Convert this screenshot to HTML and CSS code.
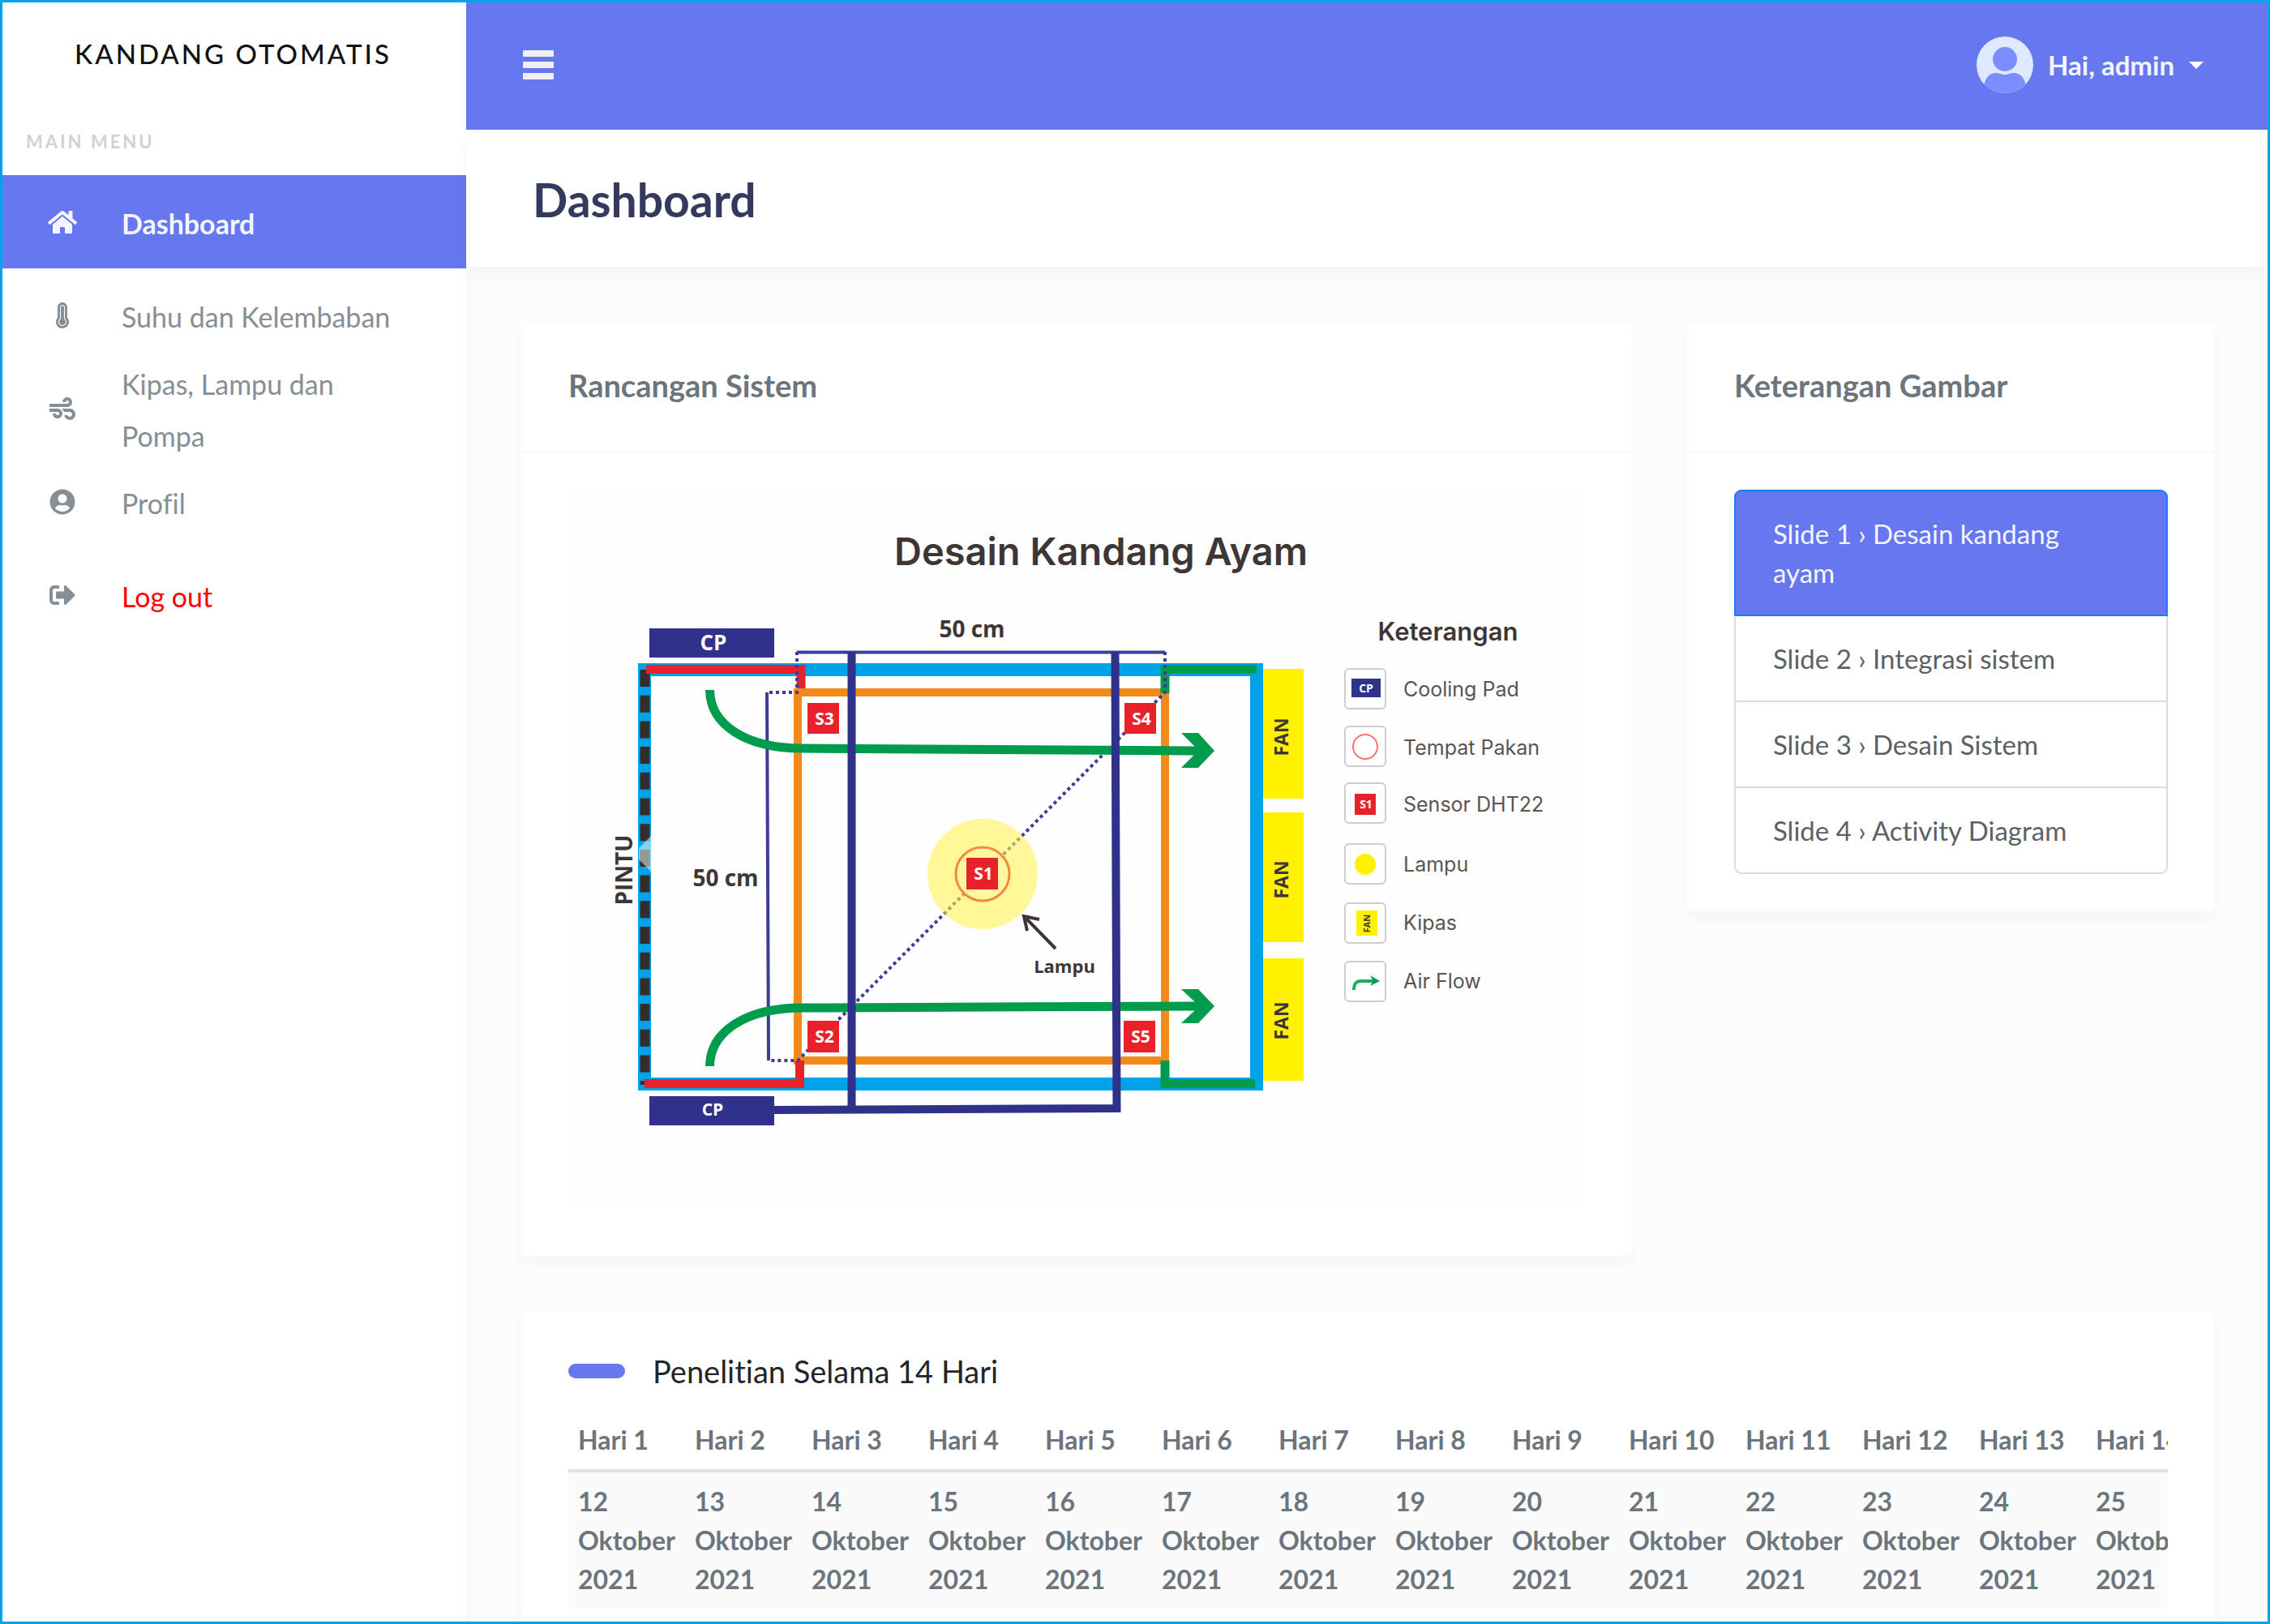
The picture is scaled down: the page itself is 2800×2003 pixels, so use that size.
FILE: index.html
```html
<!DOCTYPE html>
<html lang="id">
<head>
<meta charset="utf-8">
<meta name="viewport" content="width=device-width, initial-scale=1">
<title>Kandang Otomatis</title>
<link rel="stylesheet" href="styles.css">
</head>
<body>
<div class="app">
  <aside class="sidebar">
    <a class="brand" href="#">KANDANG OTOMATIS</a>
    <p class="menu-header">MAIN MENU</p>
    <nav class="menu">
      <a class="menu-link is-active" href="#">
        <svg class="icon" viewBox="0 0 576 512" aria-hidden="true"><path d="M280.37 148.26L96 300.11V464a16 16 0 0 0 16 16l112.06-.29a16 16 0 0 0 15.92-16V368a16 16 0 0 1 16-16h64a16 16 0 0 1 16 16v95.64a16 16 0 0 0 16 16.05L464 480a16 16 0 0 0 16-16V300L295.67 148.26a12.19 12.19 0 0 0-15.3 0zM571.6 251.47L488 182.56V44.05a12 12 0 0 0-12-12h-56a12 12 0 0 0-12 12v72.61L318.47 43a48 48 0 0 0-61 0L4.34 251.47a12 12 0 0 0-1.6 16.9l25.5 31A12 12 0 0 0 45.15 301l235.22-193.74a12.19 12.19 0 0 1 15.3 0L530.9 301a12 12 0 0 0 16.9-1.6l25.5-31a12 12 0 0 0-1.7-16.93z"/></svg>
        <span>Dashboard</span>
      </a>
      <a class="menu-link" href="#">
        <svg class="icon" viewBox="0 0 256 512" aria-hidden="true"><path d="M224 96c0-53.019-42.981-96-96-96S32 42.981 32 96v203.347C12.225 321.756.166 351.136 0 383.333c-.359 70.303 56.787 128.176 127.089 128.664.299.002.61.003.911.003 70.698 0 128-57.304 128-128 0-32.459-12.088-62.09-32-84.653V96zm-96 368l-.576-.002c-43.86-.304-79.647-36.544-79.423-80.42.173-33.98 19.266-51.652 31.999-66.08V96c0-26.467 21.533-48 48-48s48 21.533 48 48v221.498c12.63 14.312 32 32.164 32 66.502 0 44.112-35.888 80-80 80zm64-80c0 35.346-28.654 64-64 64s-64-28.654-64-64c0-23.685 12.876-44.349 32-55.417V96c0-17.673 14.327-32 32-32s32 14.327 32 32v232.583c19.124 11.068 32 31.732 32 55.417z"/></svg>
        <span>Suhu dan Kelembaban</span>
      </a>
      <a class="menu-link" href="#">
        <svg class="icon" viewBox="0 0 512 512" aria-hidden="true"><path d="M156.700 256H16c-8.800 0-16 7.200-16 16v32c0 8.800 7.200 16 16 16h142.200c15.900 0 30.800 10.900 33.400 26.600 3.300 20-12.100 37.400-31.600 37.400-14.100 0-26.100-9.200-30.400-21.900-2.100-6.300-8.600-10.100-15.200-10.100H81.600c-9.800 0-17.700 8.800-15.900 18.400 8.600 44.100 47.600 77.600 94.200 77.600 57.100 0 102.700-50.100 95.200-108.600C249 291 205.400 256 156.700 256zM16 224h336c59.700 0 106.800-54.800 93.800-116.700-7.600-36.200-36.900-65.500-73.100-73.100-55.400-11.600-105.100 24.900-114.900 75.500-1.900 9.600 6.100 18.300 15.800 18.300h32.800c6.700 0 13.100-3.800 15.200-10.100C325.900 105.200 337.900 96 352 96c19.400 0 34.900 17.400 31.600 37.400-2.600 15.700-17.400 26.600-33.400 26.600H16c-8.800 0-16 7.200-16 16v32c0 8.800 7.200 16 16 16zm384 32H243.700c19.300 16.600 33.200 38.800 39.800 64H400c26.500 0 48 21.500 48 48s-21.500 48-48 48c-17.900 0-33.300-9.900-41.600-24.400-2.900-5-8.700-7.600-14.500-7.600h-33.800c-10.900 0-19 10.800-15.300 21.100 17.800 50.600 70.500 84.800 129.400 72.300 41.200-8.700 75.100-41.600 84.700-82.700C526 321.500 470.500 256 400 256z"/></svg>
        <span>Kipas, Lampu dan Pompa</span>
      </a>
      <a class="menu-link" href="#">
        <svg class="icon" viewBox="0 0 496 512" aria-hidden="true"><path d="M248 8C111 8 0 119 0 256s111 248 248 248 248-111 248-248S385 8 248 8zm0 96c48.600 0 88 39.400 88 88s-39.400 88-88 88-88-39.400-88-88 39.400-88 88-88zm0 344c-58.700 0-111.300-26.600-146.500-68.200 18.800-35.400 55.600-59.800 98.500-59.800 2.400 0 4.800.4 7.100 1.100 13 4.200 26.600 6.900 40.900 6.900 14.300 0 28-2.700 40.900-6.900 2.300-.7 4.700-1.100 7.100-1.100 42.900 0 79.700 24.400 98.500 59.800C359.300 421.400 306.700 448 248 448z"/></svg>
        <span>Profil</span>
      </a>
      <a class="menu-link" href="#">
        <svg class="icon" viewBox="0 0 512 512" aria-hidden="true"><path d="M497 273L329 441c-15 15-41 4.500-41-17v-96H152c-13.300 0-24-10.700-24-24v-96c0-13.300 10.700-24 24-24h136V88c0-21.400 25.900-32 41-17l168 168c9.300 9.400 9.300 24.600 0 34zM192 436v-40c0-6.600-5.400-12-12-12H96c-17.700 0-32-14.300-32-32V160c0-17.700 14.300-32 32-32h84c6.600 0 12-5.400 12-12V76c0-6.600-5.400-12-12-12H96c-53 0-96 43-96 96v192c0 53 43 96 96 96h84c6.600 0 12-5.400 12-12z"/></svg>
        <span class="logout">Log out</span>
      </a>
    </nav>
  </aside>

  <div class="page">
    <header class="topbar">
      <button class="toggle" type="button" aria-label="Menu">
        <svg viewBox="0 0 38 36" aria-hidden="true"><rect width="38" height="8" rx="1"/><rect y="14" width="38" height="8" rx="1"/><rect y="28" width="38" height="8" rx="1"/></svg>
      </button>
      <button class="user" type="button">
        <svg class="avatar" viewBox="0 0 70 70" aria-hidden="true">
          <defs><clipPath id="round"><circle cx="35" cy="35" r="35"/></clipPath></defs>
          <g clip-path="url(#round)">
            <rect width="70" height="70" fill="#dfe9ff"/>
            <circle cx="35" cy="28" r="15" fill="#7b8dff"/>
            <path d="M8 72C8 54 14 45 24 45C29 45 30 47 35 47C40 47 41 45 46 45C56 45 62 54 62 72Z" fill="#7b8dff"/>
          </g>
        </svg>
        <span>Hai, admin</span>
        <span class="caret"></span>
      </button>
    </header>

    <div class="heading"><h1>Dashboard</h1></div>

    <main class="content">
      <section class="card card-design">
        <h2 class="card-header">Rancangan Sistem</h2>
        <div class="card-body">
          <svg class="diagram" viewBox="701 604 1254 887" role="img" aria-label="Desain Kandang Ayam">
            <rect x="701" y="604" width="1254" height="887" fill="#fefefe"/>
            <text class="d-title" x="1358" y="697">Desain Kandang Ayam</text>

            <!-- cage walls and door -->
            <rect x="795" y="826" width="755" height="511" fill="none" stroke="#00a2e8" stroke-width="16"/>
            <path d="M795.500 826V1338" stroke="#332d2c" stroke-width="12" stroke-dasharray="21 10.700"/>
            <path d="M788 1046L803 1031V1075L788 1060Z" fill="#fff" opacity=".5"/>

            <!-- inner frame -->
            <rect x="984" y="854" width="453" height="454" fill="none" stroke="#f28a1b" stroke-width="10"/>
            <path d="M797 825.500H988V849M795 1336.500H986.500V1308" fill="none" stroke="#e9212b" stroke-width="11"/>
            <path d="M1550 825.500H1437V855M1548 1336.500H1437V1308" fill="none" stroke="#009c4d" stroke-width="11"/>

            <!-- dimensions -->
            <path d="M983 804.500H1437M946 854L948 1308" fill="none" stroke="#3c3e96" stroke-width="4"/>
            <path d="M983 804V854H948M1437 804V854L984 1308H948" fill="none" stroke="#3c3e96" stroke-width="4" stroke-dasharray="4 4"/>

            <!-- lamp -->
            <circle cx="1212" cy="1078" r="68" fill="#fff24d" opacity=".58"/>
            <circle cx="1212" cy="1078" r="33" fill="#fff79f" stroke="#f28a3a" stroke-width="3"/>

            <!-- air flow -->
            <g fill="none" stroke="#009c4d" stroke-width="11">
              <path d="M875.500 851C876 894 920 923 990 923L1476 926"/>
              <path d="M875.500 1315C876 1272 920 1243 990 1243L1476 1241"/>
            </g>
            <path d="M1457 904H1478L1498 926L1478 947H1457L1474 930V921Z" fill="#009c4d"/>
            <path d="M1457 1220H1478L1498 1241L1478 1262H1457L1474 1246V1236Z" fill="#009c4d"/>

            <!-- cooling pad pipes -->
            <path d="M1050.500 804V1368M1375.500 804L1377.500 1372M955 1369L1382 1367" fill="none" stroke="#2f318b" stroke-width="10"/>
            <rect x="801" y="775" width="154" height="36" fill="#2f318b"/>
            <rect x="801" y="1352" width="154" height="36" fill="#2f318b"/>
            <text class="d-bold d-light" font-size="26" x="880" y="802">CP</text>
            <text class="d-bold d-light" font-size="21" x="879" y="1376">CP</text>

            <!-- sensors -->
            <g fill="#e9212b">
              <rect x="996" y="867" width="39" height="38"/>
              <rect x="1387" y="867" width="39" height="38"/>
              <rect x="996" y="1259" width="39" height="39"/>
              <rect x="1386" y="1259" width="39" height="39"/>
              <rect x="1192" y="1058" width="39" height="39"/>
            </g>
            <g class="d-bold d-light" font-size="21">
              <text x="1017" y="894">S3</text>
              <text x="1408" y="894">S4</text>
              <text x="1017" y="1286">S2</text>
              <text x="1407" y="1286">S5</text>
              <text x="1213" y="1085">S1</text>
            </g>

            <path d="M1302 1170L1264 1131M1282 1134L1263 1130L1267 1148" fill="none" stroke="#3e3634" stroke-width="4"/>
            <g class="d-bold d-dark">
              <text font-size="22" x="1313" y="1200">Lampu</text>
              <text font-size="28" x="1199" y="786">50 cm</text>
              <text font-size="28" x="895" y="1093">50 cm</text>
              <text font-size="28" transform="translate(780 1073) rotate(-90)">PINTU</text>
            </g>

            <!-- fans -->
            <g fill="#fff100">
              <rect x="1558" y="825" width="50" height="160"/>
              <rect x="1558" y="1002" width="50" height="160"/>
              <rect x="1558" y="1182" width="50" height="151"/>
            </g>
            <g class="d-bold d-dark" font-size="23">
              <text transform="translate(1589 909) rotate(-90)">FAN</text>
              <text transform="translate(1589 1085) rotate(-90)">FAN</text>
              <text transform="translate(1589 1259) rotate(-90)">FAN</text>
            </g>

            <!-- legend -->
            <text class="d-subtitle" x="1786" y="790">Keterangan</text>
            <g fill="#fff" stroke="#cdcdcd" stroke-width="2">
              <rect x="1659" y="825" width="50" height="49" rx="5"/>
              <rect x="1659" y="896" width="50" height="49" rx="5"/>
              <rect x="1659" y="966" width="50" height="49" rx="5"/>
              <rect x="1659" y="1041" width="50" height="49" rx="5"/>
              <rect x="1659" y="1114" width="50" height="49" rx="5"/>
              <rect x="1659" y="1186" width="50" height="49" rx="5"/>
            </g>
            <rect x="1667" y="837" width="36" height="23" fill="#2f318b"/>
            <text class="d-bold d-light" font-size="14" x="1685" y="854">CP</text>
            <circle cx="1684" cy="921" r="15" fill="none" stroke="#f77070" stroke-width="2"/>
            <rect x="1671" y="979" width="26" height="26" fill="#e9212b"/>
            <text class="d-bold d-light" font-size="14" x="1685" y="997">S1</text>
            <circle cx="1684" cy="1066" r="13" fill="#fff100"/>
            <rect x="1673" y="1123" width="26" height="31" fill="#fff100"/>
            <text class="d-bold d-dark" font-size="11" transform="translate(1690 1139) rotate(-90)">FAN</text>
            <path d="M1670 1221C1670 1213 1673 1210 1679 1210H1695" fill="none" stroke="#20a865" stroke-width="4"/>
            <path d="M1690 1203L1702 1210L1690 1216L1694 1210Z" fill="#009c4d"/>
            <g class="d-legend">
              <text x="1731" y="859">Cooling Pad</text>
              <text x="1731" y="931">Tempat Pakan</text>
              <text x="1731" y="1001">Sensor DHT22</text>
              <text x="1731" y="1075">Lampu</text>
              <text x="1731" y="1147">Kipas</text>
              <text x="1731" y="1219">Air Flow</text>
            </g>
          </svg>
        </div>
      </section>

      <section class="card card-slides">
        <h2 class="card-header">Keterangan Gambar</h2>
        <div class="card-body">
          <div class="slides">
            <a class="slide is-active" href="#">Slide 1 › Desain kandang ayam</a>
            <a class="slide" href="#">Slide 2 › Integrasi sistem</a>
            <a class="slide" href="#">Slide 3 › Desain Sistem</a>
            <a class="slide" href="#">Slide 4 › Activity Diagram</a>
          </div>
        </div>
      </section>

      <section class="card card-days">
        <h2 class="days-title"><span class="pill"></span>Penelitian Selama 14 Hari</h2>
        <div class="table-wrap">
          <table class="days">
            <thead>
              <tr><th>Hari 1</th><th>Hari 2</th><th>Hari 3</th><th>Hari 4</th><th>Hari 5</th><th>Hari 6</th><th>Hari 7</th><th>Hari 8</th><th>Hari 9</th><th>Hari 10</th><th>Hari 11</th><th>Hari 12</th><th>Hari 13</th><th>Hari 14</th></tr>
            </thead>
            <tbody>
              <tr><td>12 Oktober 2021</td><td>13 Oktober 2021</td><td>14 Oktober 2021</td><td>15 Oktober 2021</td><td>16 Oktober 2021</td><td>17 Oktober 2021</td><td>18 Oktober 2021</td><td>19 Oktober 2021</td><td>20 Oktober 2021</td><td>21 Oktober 2021</td><td>22 Oktober 2021</td><td>23 Oktober 2021</td><td>24 Oktober 2021</td><td>25 Oktober 2021</td></tr>
            </tbody>
          </table>
        </div>
      </section>
    </main>
  </div>
</div>
<div class="frame" aria-hidden="true"></div>
</body>
</html>
```
FILE: styles.css
```css
:root {
  --primary: #6777ef;
  --muted: #6c757d;
  --frame: #00a2e8;
}

* { box-sizing: border-box; }

body {
  margin: 0;
  background: #fafdfb;
  color: var(--muted);
  font: 400 33px/48px Lato, sans-serif;
  font-variant-ligatures: none;
}

h1, h2, p { margin: 0; }
a { color: inherit; text-decoration: none; }
button { border: 0; background: none; padding: 0; font: inherit; color: inherit; cursor: pointer; }

.app { display: flex; min-height: 100vh; }

.frame {
  position: fixed;
  inset: 0;
  border: 3px solid var(--frame);
  pointer-events: none;
}

/* Sidebar */
.sidebar {
  flex: 0 0 575px;
  background: #fff;
  box-shadow: 0 9px 18px rgba(0, 0, 0, .03);
}
.brand {
  display: block;
  line-height: 132px;
  text-align: center;
  color: #111;
  font-weight: 500;
  letter-spacing: 3px;
}
.menu-header {
  padding-left: 32px;
  line-height: 86px;
  margin-bottom: -2px;
  font-size: 22px;
  font-weight: 700;
  letter-spacing: 3px;
  color: #cdd3d8;
}
.menu-link {
  display: flex;
  align-items: center;
  gap: 53px;
  height: 115px;
  padding: 0 57px;
  font-size: 34px;
  line-height: 64px;
  color: #868e96;
}
.menu-link span { padding-top: 4px; }
.menu-link.is-active { background: var(--primary); color: #f3f5ff; font-weight: 700; }
.icon { flex: 0 0 40px; height: 32px; fill: currentColor; }
.logout { color: #f00; }

/* Page */
.page { flex: 1; min-width: 0; display: flex; flex-direction: column; }
.topbar {
  display: flex;
  align-items: center;
  justify-content: space-between;
  height: 160px;
  padding: 0 82px 0 70px;
  background: var(--primary);
  color: #f3f5ff;
}
.toggle svg { display: block; width: 38px; height: 36px; fill: #f0f0f2; }
.user { display: flex; align-items: center; gap: 18px; font-weight: 700; }
.avatar { width: 70px; height: 70px; }
.caret { border: 9px solid transparent; border-top-color: #fff; border-bottom: 0; }

.heading {
  padding: 50px 82px 47px;
  background: #fff;
  box-shadow: 0 9px 18px rgba(0, 0, 0, .03);
}
.heading h1 { font-size: 57px; line-height: 72px; font-weight: 700; color: #34395e; }

.content {
  flex: 1;
  display: grid;
  grid-template-columns: repeat(12, 1fr);
  grid-template-rows: auto 1fr;
  gap: 68px;
  align-items: start;
  padding: 69px 68px 0;
}

/* Cards */
.card {
  min-width: 0;
  border-radius: 7px;
  background: #fff;
  box-shadow: 0 9px 18px rgba(0, 0, 0, .03);
}
.card-design { grid-column: span 8; }
.card-slides { grid-column: span 4; }
.card-days { grid-column: span 12; align-self: stretch; padding: 46px 58px 12px; }
.card-header {
  padding: 49px 58px 53px;
  border-bottom: 2px solid #f7f8f8;
  font-size: 38px;
  line-height: 56px;
  font-weight: 700;
}
.card-body { padding: 46px 58px; }
.card-design .card-body { padding-bottom: 58px; }

/* Slide list */
.slides { border-radius: 9px; border: 2px solid #dcdcdc; }
.slide { display: block; padding: 28px 66px 28px 46px; color: #5b6167; }
.slide + .slide { border-top: 2px solid #dcdcdc; }
.slide.is-active {
  margin: -2px -2px 0;
  border: 2px solid #1a7dff;
  border-radius: 9px 9px 0 0;
  background: var(--primary);
  color: #f3f5ff;
}
.slide.is-active + .slide { border-top: 0; }

/* Diagram */
.diagram { display: block; width: 100%; }
.d-title { font: 600 47px Inter, sans-serif; fill: #3e3634; text-anchor: middle; }
.d-subtitle { font: 600 31px Inter, sans-serif; fill: #3e3634; text-anchor: middle; }
.d-legend { font: 400 25px Inter, sans-serif; fill: #5a5452; }
.d-bold { font-family: "Open Sans", sans-serif; font-weight: 700; text-anchor: middle; }
.d-light { fill: #fff; }
.d-dark { fill: #3e3634; }

/* Day table */
.days-title {
  display: flex;
  align-items: center;
  gap: 34px;
  margin-bottom: 21px;
  font-size: 38px;
  line-height: 56px;
  font-weight: 400;
  color: #212529;
}
.pill { width: 70px; height: 18px; border-radius: 9px; background: var(--primary); }
.table-wrap { overflow-x: auto; scrollbar-width: none; }
.days { width: 2016px; table-layout: fixed; border-collapse: separate; border-spacing: 0; font-size: 32px; }
.days th, .days td { padding: 12px 8px 12px 12px; text-align: left; font-weight: 700; }
.days th { border-bottom: 4px solid #dee2e6; }
.days td { background: #fafafa; }
```
